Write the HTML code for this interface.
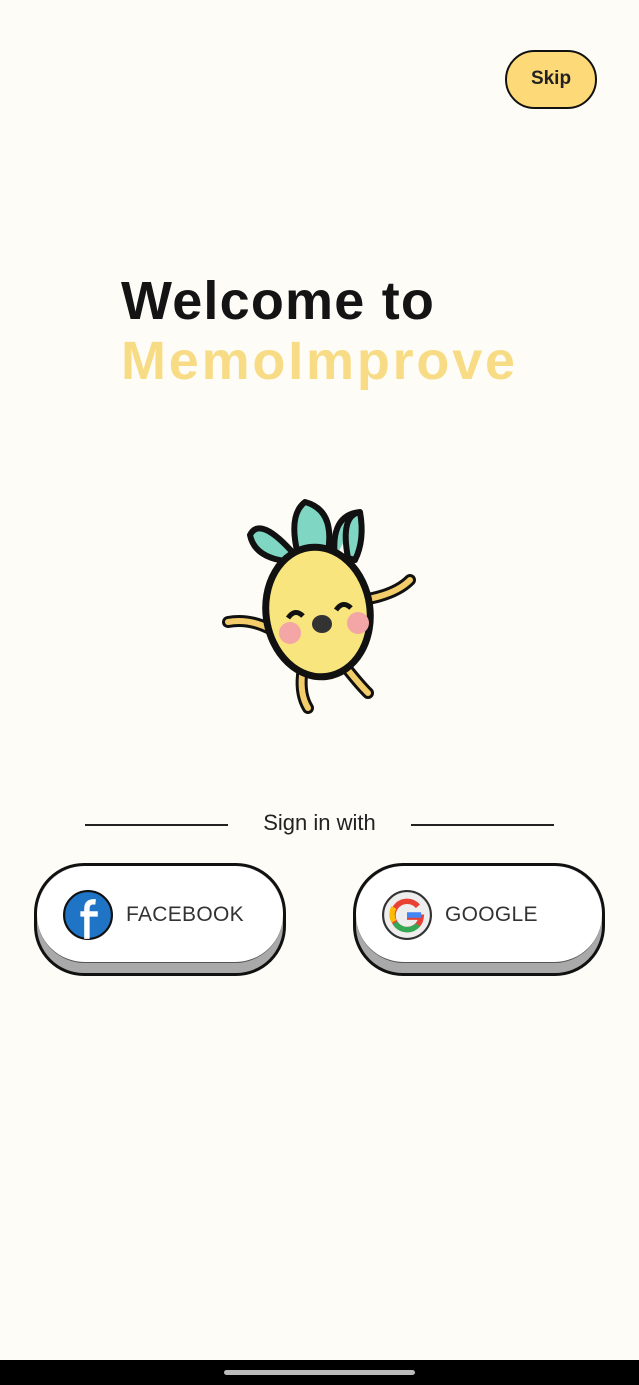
<!DOCTYPE html><html><head><style>
body{margin:0;width:639px;height:1385px;background:#fdfcf7;position:relative;overflow:hidden;font-family:"Liberation Sans",sans-serif}
.skip{position:absolute;left:505px;top:50px;width:92px;height:59px;border:2.5px solid #111;border-radius:30px;background:#fdd978;box-sizing:border-box;font-weight:bold;font-size:19px;line-height:54px;text-align:center;color:#222}
.t{position:absolute;left:121px;font-weight:bold;font-size:54px}
.line{position:absolute;top:824px;height:2px;background:#222}
.btn{position:absolute;top:863px;width:252px;height:113px;border:3px solid #111;border-radius:50px;background:#a9a9a9;box-sizing:border-box;overflow:hidden}
.btn .in{position:absolute;left:0;top:0;right:0;height:96px;background:#fff;border-radius:48px;border-bottom:1px solid #555}
.btn span{position:absolute;left:89px;top:37px;font-size:21px;color:#333;letter-spacing:.3px}
.ico{position:absolute;left:26px;top:24px;width:50px;height:50px}
</style></head><body>
<div class="skip">Skip</div>
<div class="t" style="top:270px;color:#141414;letter-spacing:1.2px">Welcome to</div>
<div class="t" style="top:330px;color:#f8dc85;letter-spacing:2.8px">MemoImprove</div>
<svg style="position:absolute;left:210px;top:490px" width="220" height="230" viewBox="0 0 220 230">
<g stroke="#111" stroke-width="12" stroke-linecap="round" fill="none">
<path d="M62 140 Q40 128 18 132" /><path d="M152 110 Q185 105 200 90"/>
<path d="M92 185 Q90 205 98 218"/><path d="M138 180 Q150 195 158 203"/></g>
<g stroke="#f3cd6a" stroke-width="6" stroke-linecap="round" fill="none">
<path d="M62 140 Q40 128 18 132" /><path d="M152 110 Q185 105 200 90"/>
<path d="M92 185 Q90 205 98 218"/><path d="M138 180 Q150 195 158 203"/></g>
<path d="M85 65 Q50 25 40 45 Q45 70 85 72Z" fill="#7fd7c3" stroke="#111" stroke-width="6" stroke-linejoin="round"/>
<path d="M138 68 Q130 25 150 22 Q155 50 145 70Z M125 68 Q120 25 150 22" fill="#7fd7c3" stroke="#111" stroke-width="6" stroke-linejoin="round"/>
<path d="M88 65 Q78 25 95 12 Q125 20 118 62Z" fill="#7fd7c3" stroke="#111" stroke-width="6" stroke-linejoin="round"/>
<ellipse cx="108" cy="122" rx="52" ry="65" fill="#f8e57d" stroke="#111" stroke-width="7" transform="rotate(-8 108 122)"/>
<circle cx="80" cy="143" r="11" fill="#f4a5a5"/><circle cx="148" cy="133" r="11" fill="#f4a5a5"/>
<path d="M78 128 Q85 118 93 126 M126 120 Q133 110 141 118" stroke="#111" stroke-width="5" fill="none"/>
<ellipse cx="112" cy="134" rx="10" ry="9" fill="#333"/>
</svg>
<div class="line" style="left:85px;width:143px"></div>
<div class="line" style="left:411px;width:143px"></div>
<div style="position:absolute;left:0;width:639px;top:810px;text-align:center;font-size:22px;color:#222">Sign in with</div>
<div class="btn" style="left:34px"><div class="in"></div>
<svg class="ico" viewBox="0 0 46 46"><circle cx="23" cy="23" r="22" fill="#1f74c6" stroke="#111" stroke-width="2"/><path d="M22 45V22h-6M22 22h10M22 32V17q0-7 8-6" stroke="#fff" stroke-width="5" fill="none"/></svg>
<span>FACEBOOK</span></div>
<div class="btn" style="left:353px"><div class="in"></div>
<svg class="ico" viewBox="0 0 46 46"><circle cx="23" cy="23" r="22" fill="#eee" stroke="#333" stroke-width="2"/><path d="M33 15A13 13 0 1 0 36 25H23" stroke="#e94235" stroke-width="5" fill="none"/><path d="M12 30A13 13 0 0 0 33 32" stroke="#34a853" stroke-width="5" fill="none"/><path d="M11 16A13 13 0 0 0 11 29" stroke="#fbbc05" stroke-width="5" fill="none"/><path d="M36 23H23" stroke="#4285f4" stroke-width="5"/></svg>
<span>GOOGLE</span></div>
<div style="position:absolute;left:0;top:1360px;width:639px;height:25px;background:#000"></div>
<div style="position:absolute;left:224px;top:1370px;width:191px;height:5px;border-radius:3px;background:#bbb"></div>
</body></html>
